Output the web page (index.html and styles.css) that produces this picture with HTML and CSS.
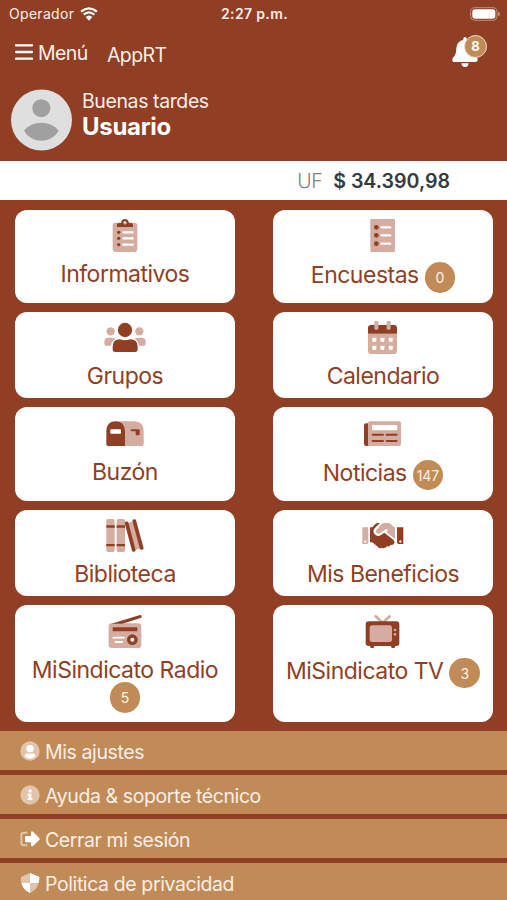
FILE: index.html
```html
<!DOCTYPE html>
<html lang="es">
<head>
    <meta charset="UTF-8">
    <meta name="viewport" content="width=device-width, initial-scale=1.0">
    <title>AppRT</title>
    <link rel="stylesheet" href="styles.css">
</head>
<body>

    <!-- Barra de estado -->
    <div class="status-bar">
        <div class="carrier">
            <span>Operador</span>
            <svg class="wifi" viewBox="0 0 54 42">
                <path d="M3 14Q27-6 51 14M11 23Q27 9 43 23" fill="none" stroke="#fff" stroke-width="6.5"/>
                <path d="M17 30Q27 21 37 30L27 41Z" fill="#fff"/>
            </svg>
        </div>
        <span class="clock">2:27 p.m.</span>
        <svg class="battery" viewBox="0 0 90 42">
            <rect x="2" y="2" width="79" height="38" rx="12" fill="none" stroke="#c08f7d" stroke-width="3"/>
            <rect x="7" y="7" width="69" height="28" rx="7" fill="#fff"/>
            <path d="M84 14Q90 16 90 21T84 28Z" fill="#c08f7d"/>
        </svg>
    </div>

    <!-- Navegación -->
    <nav class="navbar">
        <a class="menu-link">
            <svg class="bars" viewBox="0 0 54 48"><path d="M3 4H51M3 24H51M3 44H51" stroke="#fff" stroke-width="7" stroke-linecap="round"/></svg>
            <span class="menu-text">Menú</span>
        </a>
        <span class="brand">AppRT</span>
        <div class="bell-box">
            <svg class="bell" viewBox="0 0 78 90">
                <path d="M39 0Q44 0 44 5V8Q64 13 65 34Q65 53 74 61Q78 65 77 70Q76 75 71 75H6Q1 75 1 70Q0 65 4 61Q13 53 13 34Q14 13 34 8V5Q34 0 39 0ZM28 79H50Q49 90 39 90T28 79Z" fill="#fff"/>
            </svg>
            <span class="bell-count">8</span>
        </div>
    </nav>

    <!-- Saludo -->
    <header class="user">
        <svg class="avatar" viewBox="0 0 183 183">
            <circle cx="91.500" cy="91.500" r="91.500" fill="#dfdfdf"/>
            <circle cx="91" cy="56" r="27" fill="#a0a0a0"/>
            <path d="M39 124C62 92 120 92 143 124C120 164 62 164 39 124Z" fill="#a0a0a0"/>
        </svg>
        <div class="greeting">
            <div class="hello">Buenas tardes</div>
            <div class="name">Usuario</div>
        </div>
    </header>

    <!-- Valor de la UF -->
    <div class="uf-bar">
        <span class="uf-label">UF</span>
        <span class="uf-value">$ 34.390,98</span>
    </div>

    <!-- Opciones principales -->
    <main class="cards">
        <a class="card">
            <svg class="icon" viewBox="0 0 126 99">
                <rect class="soft" x="26" y="11" width="74" height="88" rx="9"/>
                <path class="dark" fill-rule="evenodd" d="M39 24V17Q39 12 44 12H51Q53 0 63 0T75 12H82Q87 12 87 17V24ZM63 7A5 5 0 1 0 63.1 7Z"/>
                <circle class="dark" cx="44" cy="40" r="5"/><circle class="dark" cx="44" cy="58" r="5"/><circle class="dark" cx="44" cy="77" r="5"/>
                <path class="line" d="M58 40H86M58 58H86M58 77H86"/>
            </svg>
            <div class="label">Informativos</div>
        </a>
        <a class="card">
            <svg class="icon" viewBox="0 0 126 99">
                <rect class="soft" x="25" y="0" width="74" height="99" rx="4"/>
                <circle class="dark" cx="43" cy="25" r="7"/><circle class="dark" cx="43" cy="49" r="7"/><circle class="dark" cx="43" cy="74" r="7"/>
                <path class="line" d="M58 25H85M58 49H85M58 74H85"/>
            </svg>
            <div class="label">Encuestas <span class="badge">0</span></div>
        </a>
        <a class="card">
            <svg class="icon" viewBox="0 0 126 99">
                <circle class="soft" cx="20" cy="31" r="12.500"/><circle class="soft" cx="106" cy="31" r="12.500"/>
                <path class="soft" d="M1 68V62Q1 50 13 50H25Q29 50 34 54Q23 60 21 74H6Q1 74 1 68ZM125 68V62Q125 50 113 50H101Q97 50 92 54Q103 60 105 74H120Q125 74 125 68Z"/>
                <circle class="dark" cx="63" cy="27" r="21.500"/>
                <path class="dark" d="M26 85V77Q26 55 48 55Q63 61 78 55Q101 55 101 77V85Q101 93 93 93H34Q26 93 26 85Z"/>
            </svg>
            <div class="label">Grupos</div>
        </a>
        <a class="card">
            <svg class="icon" viewBox="0 0 126 99">
                <path class="soft" d="M18 38H105V90Q105 99 96 99H27Q18 99 18 90Z"/>
                <path class="dark" d="M18 38V21Q18 12 27 12H96Q105 12 105 21V38Z"/>
                <rect class="soft" x="37" y="0" width="12" height="26" rx="4"/><rect class="soft" x="74" y="0" width="12" height="26" rx="4"/>
                <g fill="#fff">
                    <rect x="31" y="50" width="12" height="12" rx="2"/><rect x="55" y="50" width="12" height="12" rx="2"/><rect x="80" y="50" width="12" height="12" rx="2"/>
                    <rect x="31" y="74" width="12" height="12" rx="2"/><rect x="55" y="74" width="12" height="12" rx="2"/><rect x="80" y="74" width="12" height="12" rx="2"/>
                </g>
            </svg>
            <div class="label">Calendario</div>
        </a>
        <a class="card">
            <svg class="icon" viewBox="0 0 126 99">
                <path class="soft" d="M45 13H91Q119 14 119 42V82Q119 87 114 87H63V42Q63 22 45 13Z"/>
                <path class="dark" d="M7 82V42Q8 13 35 13T63 42V87H12Q7 87 7 82Z"/>
                <rect x="19" y="37" width="32" height="13" rx="2" fill="#fff"/>
                <path class="dark" d="M83 37H104Q107 37 107 40V52Q107 55 104 55H98Q95 55 95 52V43H83Q80 43 80 40T83 37Z"/>
            </svg>
            <div class="label">Buzón</div>
        </a>
        <a class="card">
            <svg class="icon" viewBox="0 0 126 99">
                <path class="dark" d="M18 19H12Q6 19 6 25V80Q6 87 13 87H20Z"/>
                <rect class="soft" x="18" y="13" width="99" height="74" rx="6"/>
                <rect x="30" y="24" width="76" height="16" rx="3" fill="#fff"/>
                <path class="stroke" stroke-width="6" d="M32 53H63M74 53H104M32 72H63M74 72H104"/>
            </svg>
            <div class="label">Noticias <span class="badge">147</span></div>
        </a>
        <a class="card">
            <svg class="icon" viewBox="0 0 126 99">
                <rect class="soft" x="7" y="0" width="25" height="99" rx="5"/><rect class="soft" x="38" y="0" width="25" height="99" rx="5"/>
                <path class="dark" d="M7 19H32V26H7ZM38 19H63V26H38ZM7 75H32V82H7ZM38 75H63V82H38Z"/>
                <path class="soft" d="M68 13L91 6L113 88L88 94Z"/>
                <path class="stroke" stroke-width="11" d="M68 13L89 93M91 6L113 87"/>
            </svg>
            <div class="label">Biblioteca</div>
        </a>
        <a class="card">
            <svg class="icon" viewBox="0 0 126 99">
                <path class="soft" fill-rule="evenodd" d="M1 25H19V70Q19 75 14 75H1ZM10 64A3.500 3.500 0 1 0 10.100 64Z"/>
                <path class="dark" fill-rule="evenodd" d="M105 25H124V75H110Q105 75 105 70ZM115 64A3.500 3.500 0 1 0 115.100 64Z"/>
                <path class="dark" d="M24 25H31L40 15Q43 12 48 12H54L38 28Q31 37 38 46Q47 55 57 48L67 41L94 62Q101 69 95 75Q91 79 86 77Q83 85 75 82Q68 90 60 87Q53 89 47 83L31 70H24Z"/>
                <path class="soft" d="M58 16Q62 12 68 12H78Q83 12 87 16L96 25H99V60L73 39L76 36Q78 33 76 31T71 31L54 43Q48 46 44 42T43 33Z"/>
            </svg>
            <div class="label">Mis Beneficios</div>
        </a>
        <a class="card">
            <svg class="icon" viewBox="0 0 126 99">
                <rect class="soft" x="14" y="25" width="98" height="74" rx="9"/>
                <path class="dark" d="M22 26L108 0Q112 0 113 4T110 9L55 26Z"/>
                <rect class="dark" x="26" y="37" width="74" height="12" rx="2"/>
                <circle cx="85" cy="74" r="11" fill="#fff" stroke="#903f24" stroke-width="10"/>
                <path class="line thin" d="M28 68H60M34 81H55"/>
            </svg>
            <div class="label">MiSindicato Radio <span class="badge">5</span></div>
        </a>
        <a class="card">
            <svg class="icon" viewBox="0 0 126 99">
                <path d="M41 4L59 21M83 4L65 21" fill="none" stroke="#d4aca0" stroke-width="8" stroke-linecap="round"/>
                <rect class="dark" x="11" y="19" width="101" height="74" rx="9"/>
                <path class="dark" d="M23 90H38L35 99H26ZM86 90H101L98 99H89Z"/>
                <rect class="soft" x="23" y="31" width="67" height="50" rx="7"/>
                <circle class="soft" cx="99" cy="45" r="4"/><circle class="soft" cx="99" cy="58" r="4"/>
            </svg>
            <div class="label">MiSindicato TV <span class="badge">3</span></div>
        </a>
    </main>

    <!-- Opciones de la cuenta -->
    <footer class="options">
        <a class="option">
            <svg class="option-icon" viewBox="0 0 60 60">
                <circle cx="30" cy="30" r="29" fill="#e0c5ab"/>
                <circle cx="30" cy="23" r="11" fill="#fff"/>
                <path d="M13 45Q15 36 24 37Q30 40 36 37Q45 36 47 45Q41 53 30 53T13 45Z" fill="#fff"/>
            </svg>
            <span class="option-text">Mis ajustes</span>
        </a>
        <a class="option">
            <svg class="option-icon" viewBox="0 0 60 60">
                <circle cx="30" cy="30" r="29" fill="#e0c5ab"/>
                <circle cx="30" cy="18" r="5" fill="#fff"/>
                <path d="M23 26H34V39H37V45H23V39H26V32H23Z" fill="#fff"/>
            </svg>
            <span class="option-text">Ayuda &amp; soporte técnico</span>
        </a>
        <a class="option">
            <svg class="option-icon" viewBox="0 0 60 60">
                <path d="M22 11H12Q4 11 4 19V41Q4 49 12 49H22" fill="none" stroke="#e0c5ab" stroke-width="6"/>
                <path d="M18 21H33V10Q34 5 39 8L58 27Q60 30 58 33L39 51Q34 54 33 49V40H18Q15 40 15 37V24Q15 21 18 21Z" fill="#fff"/>
            </svg>
            <span class="option-text">Cerrar mi sesión</span>
        </a>
        <a class="option">
            <svg class="option-icon" viewBox="0 0 60 60">
                <path d="M30 0L58 12Q59 47 30 60Q1 47 2 12Z" fill="#e0c5ab"/>
                <path d="M30 0L58 12Q58 21 56 30H30ZM30 30V60Q9 50 4 30Z" fill="#fff"/>
            </svg>
            <span class="option-text">Politica de privacidad</span>
        </a>
    </footer>

</body>
</html>
```
FILE: styles.css
```css
* {
    box-sizing: border-box;
}

body {
    font-family: Inter, "Liberation Sans", sans-serif;
    margin: 0;
    height: 900px;
    overflow: hidden;
    background-color: #903f24;
    color: #fbeee8;
}

svg {
    display: block;
    flex: none;
}

/* Barra de estado */
.status-bar {
    display: grid;
    grid-template-columns: 1fr auto 1fr;
    align-items: center;
    height: 28px;
    padding: 0 7px 0 9px;
    font-size: 14px;
    line-height: 28px;
}

.carrier {
    display: flex;
    align-items: center;
    gap: 6px;
    letter-spacing: 0.3px;
}

.wifi {
    width: 18px;
    height: 14px;
    margin-top: -1px;
}

.clock {
    font-weight: 600;
    letter-spacing: 0.35px;
}

.battery {
    width: 30px;
    height: 14px;
    margin-top: -1px;
    justify-self: end;
}

/* Navegación */
.navbar {
    display: flex;
    height: 61px;
    padding: 8px 20px 0 15px;
    font-size: 19.5px;
    letter-spacing: -0.6px;
    line-height: 34px;
}

.menu-link {
    display: flex;
    gap: 5px;
    width: 92px;
}

.bars {
    width: 18px;
    height: 16px;
    margin-top: 8px;
}

.brand {
    line-height: 39px;
}

.bell-box {
    position: relative;
    width: 35px;
    margin: 1px 0 0 auto;
}

.bell {
    width: 26px;
    height: 30px;
}

.bell-count {
    position: absolute;
    top: -2px;
    left: 12px;
    width: 23px;
    height: 23px;
    border: 1.5px solid #f0dccb;
    border-radius: 50%;
    background-color: #c18b57;
    color: white;
    font-size: 13px;
    font-weight: 700;
    letter-spacing: 0;
    line-height: 21px;
    text-align: center;
}

/* Saludo */
.user {
    display: flex;
    gap: 10px;
    height: 72px;
    padding-left: 11px;
}

.avatar {
    width: 61px;
    height: 62px;
}

.hello {
    font-size: 19.5px;
    letter-spacing: -0.4px;
    line-height: 24px;
}

.name {
    color: white;
    font-size: 24px;
    font-weight: 700;
    letter-spacing: -0.3px;
    line-height: 28px;
}

/* Valor de la UF */
.uf-bar {
    display: flex;
    justify-content: flex-end;
    gap: 11px;
    height: 39px;
    padding-right: 57px;
    background-color: white;
    font-size: 19.6px;
    line-height: 41px;
}

.uf-label {
    color: #7d8287;
    font-weight: 300;
    letter-spacing: -0.5px;
}

.uf-value {
    color: #343a40;
    font-weight: 600;
}

/* Tarjetas */
.cards {
    display: grid;
    grid-template-columns: 220px 220px;
    grid-template-rows: 93px 86px 93.5px 86px 117px;
    justify-content: space-between;
    row-gap: 9.3px;
    height: 531px;
    padding: 9.5px 14px 0 15px;
}

.card {
    display: flex;
    flex-direction: column;
    align-items: center;
    padding-top: 9.5px;
    border-radius: 12px;
    background-color: white;
    color: #903f24;
}

.icon {
    width: 42px;
    height: 33px;
}

.soft {
    fill: #d4aca0;
}

.dark {
    fill: #903f24;
}

.stroke {
    fill: none;
    stroke: #903f24;
    stroke-linecap: round;
}

.line {
    fill: none;
    stroke: white;
    stroke-width: 7;
    stroke-linecap: round;
}

.thin {
    stroke-width: 5.5;
}

.label {
    margin-top: 10px;
    padding: 0 8px;
    font-size: 23px;
    letter-spacing: -0.5px;
    line-height: 24.5px;
    text-align: center;
}

.badge {
    display: inline-block;
    width: 30.5px;
    height: 30.5px;
    border-radius: 50%;
    background-color: #c18b57;
    color: #fff3e8;
    font-size: 14px;
    letter-spacing: 0;
    line-height: 32px;
}

/* Opciones de la cuenta */
.options {
    display: flex;
    flex-direction: column;
    gap: 5px;
}

.option {
    display: flex;
    align-items: center;
    gap: 5px;
    height: 39.1px;
    flex: none;
    padding-left: 20px;
    background-color: #c18b57;
    font-size: 19.5px;
    letter-spacing: -0.4px;
    line-height: 36px;
}

.option-icon {
    width: 20px;
    height: 20px;
}

.option-text {
    padding-top: 3px;
}
```
